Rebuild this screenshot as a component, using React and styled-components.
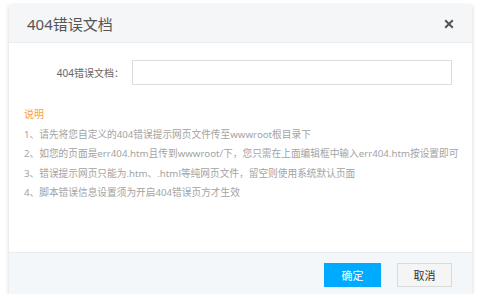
import React from "react";
import styled, { createGlobalStyle } from "styled-components";

const Global = createGlobalStyle`
  html, body { margin: 0; padding: 0; background: #fff; }
  body { font-family: "Noto Sans", "Noto Sans CJK SC", sans-serif; }
`;

const Page = styled.div`
  padding: 5px 0 0 9px;
`;

const Dialog = styled.div`
  width: 463px;
  height: 289px;
  background: #fff;
  box-shadow: 0 1px 4px rgba(0, 0, 0, 0.18);
  display: flex;
  flex-direction: column;
`;

const Header = styled.div`
  height: 38px;
  box-sizing: border-box;
  background: #f4f6f8;
  border-bottom: 1px solid #e9edf0;
  display: flex;
  align-items: center;
  justify-content: space-between;
  padding: 0 18px;
`;

const Title = styled.div`
  font-size: 15px;
  color: #555;
  line-height: 1;
  padding-top: 2px;
`;

const Close = styled.button`
  border: 0;
  background: none;
  padding: 0;
  width: 10px;
  height: 10px;
  display: flex;
  cursor: pointer;
`;

const Body = styled.div`
  flex: 1;
  padding: 17px 0 0 0;
`;

const Row = styled.div`
  display: flex;
  align-items: center;
`;

const Label = styled.label`
  width: 115px;
  text-align: right;
  font-size: 10px;
  color: #666;
  margin-right: 8px;
`;

const Input = styled.input`
  width: 320px;
  height: 25px;
  box-sizing: border-box;
  border: 1px solid #dcdcdc;
  outline: none;
  padding: 0 6px;
`;

const Notes = styled.div`
  margin-top: 20px;
  padding-left: 15px;
  font-size: 9.7px;
  line-height: 19.5px;
  color: #a3a3a3;
  white-space: nowrap;
`;

const NoteTitle = styled.div`
  color: #ff9a3c;
  font-size: 10px;
`;

const Footer = styled.div`
  height: 42px;
  box-sizing: border-box;
  background: #f4f7f9;
  border-top: 1px solid #e9edf0;
  display: flex;
  justify-content: flex-end;
  align-items: flex-start;
  padding: 10px 20px 0 0;
  gap: 16px;
`;

const Button = styled.button`
  width: ${(p) => (p.primary ? "57px" : "55px")};
  height: 24px;
  box-sizing: border-box;
  font-family: inherit;
  font-size: 11px;
  padding: 0;
  cursor: pointer;
  background: ${(p) => (p.primary ? "#00aaff" : "#f5f5f5")};
  color: ${(p) => (p.primary ? "#fff" : "#333")};
  border: 1px solid ${(p) => (p.primary ? "#00aaff" : "#dadada")};
`;

const notes = [
  "1、请先将您自定义的404错误提示网页文件传至wwwroot根目录下",
  "2、如您的页面是err404.htm且传到wwwroot/下，您只需在上面编辑框中输入err404.htm按设置即可",
  "3、错误提示网页只能为.htm、.html等纯网页文件，留空则使用系统默认页面",
  "4、脚本错误信息设置须为开启404错误页方才生效",
];

export default function App() {
  return (
    <>
      <Global />
      <Page>
        <Dialog>
          <Header>
            <Title>404错误文档</Title>
            <Close aria-label="关闭">
              <svg width="10" height="10" viewBox="0 0 10 10">
                <path d="M1.2 1.2 L8.8 8.8 M8.8 1.2 L1.2 8.8" stroke="#555" strokeWidth="2" />
              </svg>
            </Close>
          </Header>
          <Body>
            <Row>
              <Label>404错误文档：</Label>
              <Input />
            </Row>
            <Notes>
              <NoteTitle>说明</NoteTitle>
              {notes.map((n) => (
                <div key={n}>{n}</div>
              ))}
            </Notes>
          </Body>
          <Footer>
            <Button primary>确定</Button>
            <Button>取消</Button>
          </Footer>
        </Dialog>
      </Page>
    </>
  );
}
